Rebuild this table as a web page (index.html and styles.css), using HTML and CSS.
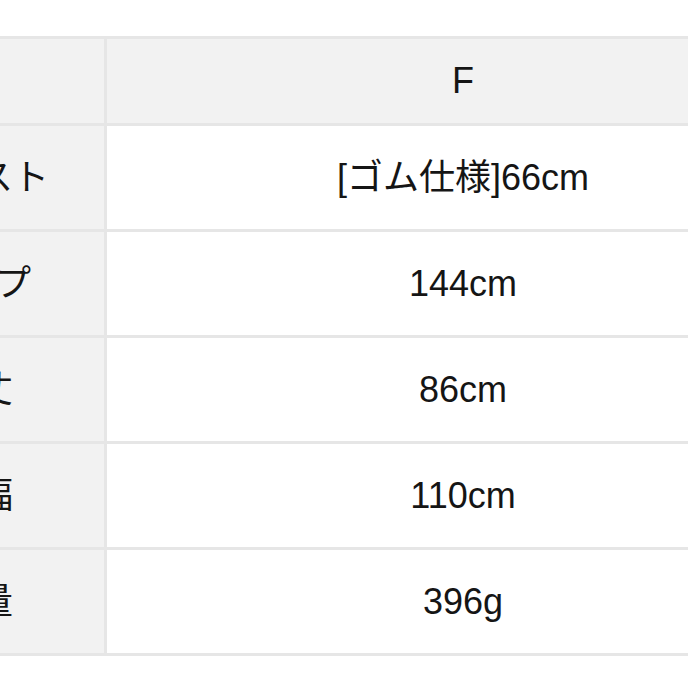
FILE: index.html
```html
<!DOCTYPE html>
<html lang="ja">
<head>
<meta charset="utf-8">
<title>サイズ表</title>
<link rel="stylesheet" href="styles.css">
</head>
<body>
<table class="size-table">
  <colgroup>
    <col class="col-label">
    <col class="col-value">
  </colgroup>
  <thead>
    <tr class="head-row">
      <th class="label"></th>
      <th class="value head">F</th>
    </tr>
  </thead>
  <tbody>
    <tr class="row"><th class="label">ウエスト</th><td class="value">[ゴム仕様]66cm</td></tr>
    <tr class="row"><th class="label">ヒップ</th><td class="value">144cm</td></tr>
    <tr class="row"><th class="label">総丈</th><td class="value">86cm</td></tr>
    <tr class="row"><th class="label">裾幅</th><td class="value">110cm</td></tr>
    <tr class="row"><th class="label">重量</th><td class="value">396g</td></tr>
  </tbody>
</table>
</body>
</html>
```
FILE: styles.css
```css
html, body {
  margin: 0;
  padding: 0;
  background: #ffffff;
  overflow: hidden;
}

body {
  font-family: "Liberation Sans", "Noto Sans CJK JP", sans-serif;
  color: #151515;
}

.size-table {
  margin-top: 36px;
  margin-left: -153px;
  width: 975px;
  table-layout: fixed;
  border-collapse: separate;
  border-spacing: 3px;
  background: #e6e6e6;
}

.col-label { width: 254px; }
.col-value { width: 712px; }

.size-table th,
.size-table td {
  padding: 0;
  font-size: 36px;
  font-weight: normal;
  text-align: center;
  vertical-align: middle;
  line-height: 1.2;
}

.head-row th { height: 84px; }
.row th, .row td { height: 103px; }

.label { background: #f2f2f2; }
.value { background: #ffffff; }
.value.head { background: #f2f2f2; }
```
